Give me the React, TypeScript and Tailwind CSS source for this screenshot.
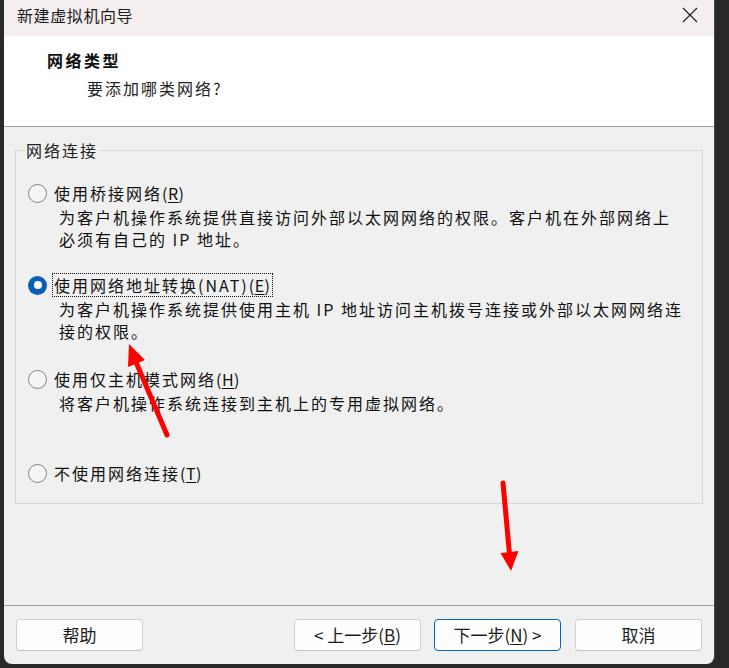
import React from "react";

const FONT = { fontFamily: '"Noto Sans CJK SC", "Noto Sans", sans-serif' };

function Radio({ checked }: { checked?: boolean }) {
  if (checked) {
    return (
      <div className="w-[19px] h-[19px] rounded-full bg-[#0a5fb4] flex items-center justify-center shrink-0">
        <div className="w-[8px] h-[8px] rounded-full bg-white" />
      </div>
    );
  }
  return <div className="w-[19px] h-[19px] rounded-full border border-[#858585] bg-[#f5f5f5] shrink-0" />;
}

function Option({
  label,
  mn,
  checked,
  focused,
  lines,
  className,
}: {
  label: string;
  mn: string;
  checked?: boolean;
  focused?: boolean;
  lines?: string[];
  className?: string;
}) {
  return (
    <div className={className}>
      <div className="flex items-center h-[24px]">
        <Radio checked={checked} />
        <div
          className={
            "ml-[5px] h-[24px] flex items-center px-[1px] text-[16px] tracking-[2px] text-[#111] border " +
            (focused ? "border-dotted border-[#111]" : "border-transparent")
          }
        >
          {label}
          <span className="tracking-[0.5px]">
            (<span className="underline underline-offset-2">{mn}</span>)
          </span>
        </div>
      </div>
      {lines && (
        <div className="mt-[1px] ml-[31px] text-[16px] leading-[22px] tracking-[2px] text-[#111]">
          {lines.map((l) => (
            <div key={l} className="whitespace-nowrap">
              {l}
            </div>
          ))}
        </div>
      )}
    </div>
  );
}

function Btn({
  children,
  primary,
  className,
}: {
  children: React.ReactNode;
  primary?: boolean;
  className?: string;
}) {
  return (
    <div
      className={
        "w-[127px] h-[32px] rounded-[4px] bg-[#fdfdfd] flex items-center justify-center text-[17px] text-[#1b1b1b] border " +
        (primary ? "border-[#0067c0]" : "border-[#d0d0d0] border-b-[#c2c2c2]") +
        " " +
        (className ?? "")
      }
    >
      {children}
    </div>
  );
}

export default function App() {
  return (
    <div className="w-[729px] h-[668px] bg-[#282828] relative overflow-hidden flex" style={FONT}>
      <div className="ml-[4px] w-[711px] h-[664px] flex flex-col bg-[#f0f0f0] rounded-b-[8px] overflow-hidden border-r border-[#454545]">
        {/* Title bar */}
        <div className="h-[36px] bg-[#f4efee] flex items-start justify-between pl-[13px] pr-[16px] shrink-0">
          <div className="pt-[4px] leading-[22px] text-[16px] tracking-[0.6px] text-[#1a1a1a]">新建虚拟机向导</div>
          <svg width="16" height="16" viewBox="0 0 16 16" className="mt-[7px]">
            <path d="M1 1 L15 15 M15 1 L1 15" stroke="#1a1a1a" strokeWidth="1.1" fill="none" />
          </svg>
        </div>
        {/* Header */}
        <div className="h-[91px] bg-white border-b border-[#a0a0a0] shrink-0 pt-[13px]">
          <div className="pl-[43px] text-[16px] leading-[22px] font-bold tracking-[2.5px] text-[#111]">网络类型</div>
          <div className="pl-[83px] mt-[6px] text-[16px] leading-[22px] tracking-[2px] text-[#222]">要添加哪类网络?</div>
        </div>
        {/* Body */}
        <div className="h-[478px] shrink-0 pt-[23px] pl-[11px] pr-[11px]">
          <div className="relative h-[354px] border border-[#d7d7d7] pl-[12px] pt-[30px]">
            <span className="absolute left-[9px] top-[-12px] px-[1px] bg-[#f0f0f0] text-[16px] leading-[22px] tracking-[2px] text-[#222]">
              网络连接
            </span>
            <Option
              label="使用桥接网络"
              mn="R"
              lines={[
                "为客户机操作系统提供直接访问外部以太网网络的权限。客户机在外部网络上",
                "必须有自己的 IP 地址。",
              ]}
            />
            <Option
              className="mt-[23px]"
              label="使用网络地址转换(NAT)"
              mn="E"
              checked
              focused
              lines={[
                "为客户机操作系统提供使用主机 IP 地址访问主机拨号连接或外部以太网网络连",
                "接的权限。",
              ]}
            />
            <Option
              className="mt-[25px]"
              label="使用仅主机模式网络"
              mn="H"
              lines={["将客户机操作系统连接到主机上的专用虚拟网络。"]}
            />
            <Option className="mt-[47px]" label="不使用网络连接" mn="T" />
          </div>
        </div>
        {/* Footer */}
        <div className="flex-1 border-t border-[#a0a0a0] pt-[13px] pl-[12px] flex items-start">
          <Btn>帮助</Btn>
          <Btn className="ml-[151px]">
            &lt; 上一步(<span className="underline underline-offset-2">B</span>)
          </Btn>
          <Btn primary className="ml-[13px]">
            下一步(<span className="underline underline-offset-2">N</span>) &gt;
          </Btn>
          <Btn className="ml-[14px]">取消</Btn>
        </div>
      </div>
      {/* annotation arrows */}
      <svg className="absolute inset-0 pointer-events-none" width="729" height="668" viewBox="0 0 729 668">
        <line x1="167" y1="435" x2="136" y2="362" stroke="#ff0000" strokeWidth="5" strokeLinecap="round" />
        <polygon points="129,344 145,360 128,367" fill="#ff0000" />
        <line x1="503" y1="483" x2="509.5" y2="554" stroke="#ff0000" strokeWidth="5" strokeLinecap="round" />
        <polygon points="511,571 518.5,551 500.5,553" fill="#ff0000" />
      </svg>
    </div>
  );
}
